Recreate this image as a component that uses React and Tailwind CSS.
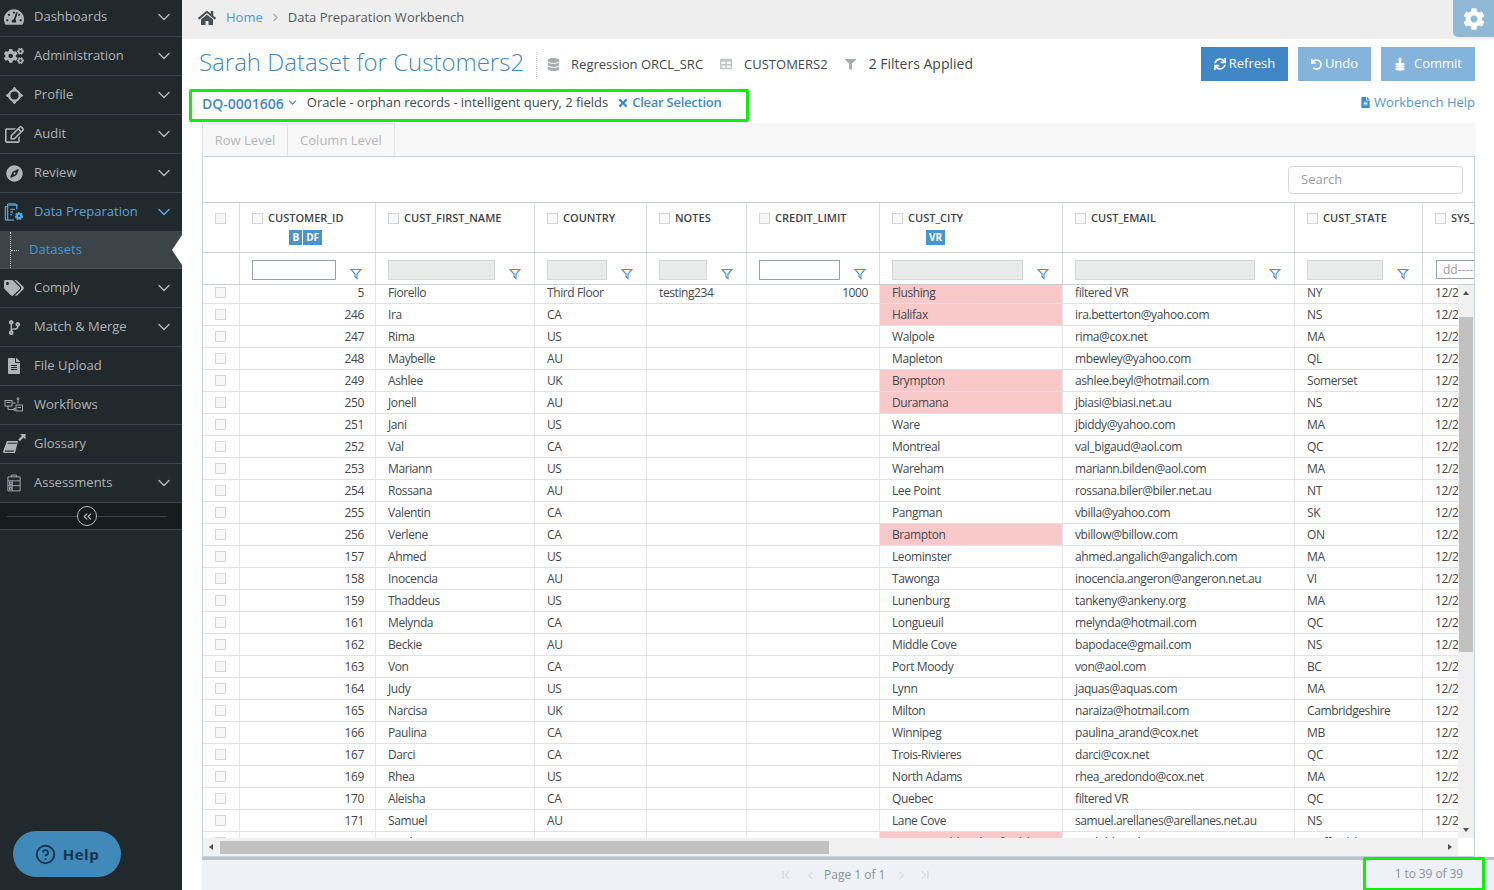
import {
  FaCodeBranch,
  FaCog,
  FaCogs,
  FaCompass,
  FaDatabase,
  FaFileAlt,
  FaFilter,
  FaHome,
  FaRegEdit,
  FaSync,
  FaTable,
  FaTachometerAlt,
  FaTags,
  FaTimes,
  FaUndo,
} from "react-icons/fa";
import {
  ChevronDown,
  ChevronFirst,
  ChevronLast,
  ChevronLeft,
  ChevronRight,
  ChevronsLeft,
  CircleHelp,
} from "lucide-react";

const rows = [
  ["5", "Fiorello", "Third Floor", "testing234", "1000", "Flushing", "filtered VR", "NY", true],
  ["246", "Ira", "CA", "", "", "Halifax", "ira.betterton@yahoo.com", "NS", true],
  ["247", "Rima", "US", "", "", "Walpole", "rima@cox.net", "MA"],
  ["248", "Maybelle", "AU", "", "", "Mapleton", "mbewley@yahoo.com", "QL"],
  ["249", "Ashlee", "UK", "", "", "Brympton", "ashlee.beyl@hotmail.com", "Somerset", true],
  ["250", "Jonell", "AU", "", "", "Duramana", "jbiasi@biasi.net.au", "NS", true],
  ["251", "Jani", "US", "", "", "Ware", "jbiddy@yahoo.com", "MA"],
  ["252", "Val", "CA", "", "", "Montreal", "val_bigaud@aol.com", "QC"],
  ["253", "Mariann", "US", "", "", "Wareham", "mariann.bilden@aol.com", "MA"],
  ["254", "Rossana", "AU", "", "", "Lee Point", "rossana.biler@biler.net.au", "NT"],
  ["255", "Valentin", "CA", "", "", "Pangman", "vbilla@yahoo.com", "SK"],
  ["256", "Verlene", "CA", "", "", "Brampton", "vbillow@billow.com", "ON", true],
  ["157", "Ahmed", "US", "", "", "Leominster", "ahmed.angalich@angalich.com", "MA"],
  ["158", "Inocencia", "AU", "", "", "Tawonga", "inocencia.angeron@angeron.net.au", "VI"],
  ["159", "Thaddeus", "US", "", "", "Lunenburg", "tankeny@ankeny.org", "MA"],
  ["161", "Melynda", "CA", "", "", "Longueuil", "melynda@hotmail.com", "QC"],
  ["162", "Beckie", "AU", "", "", "Middle Cove", "bapodace@gmail.com", "NS"],
  ["163", "Von", "CA", "", "", "Port Moody", "von@aol.com", "BC"],
  ["164", "Judy", "US", "", "", "Lynn", "jaquas@aquas.com", "MA"],
  ["165", "Narcisa", "UK", "", "", "Milton", "naraiza@hotmail.com", "Cambridgeshire"],
  ["166", "Paulina", "CA", "", "", "Winnipeg", "paulina_arand@cox.net", "MB"],
  ["167", "Darci", "CA", "", "", "Trois-Rivieres", "darci@cox.net", "QC"],
  ["169", "Rhea", "US", "", "", "North Adams", "rhea_aredondo@cox.net", "MA"],
  ["170", "Aleisha", "CA", "", "", "Quebec", "filtered VR", "QC"],
  ["171", "Samuel", "AU", "", "", "Lane Cove", "samuel.arellanes@arellanes.net.au", "NS"],
  ["172", "Noel", "UK", "", "", "Aston Tirrold and Oxfordshire", "noah.bl@aol.com", "Staffordshire", true],
];

const ProfileIcon = () => (
  <svg viewBox="0 0 20 20" className="w-[19px] h-[19px]" fill="none" stroke="currentColor">
    <circle cx="10" cy="10" r="5.5" strokeWidth="2.4" />
    <path d="M10 1l2 3h-4zM10 19l2-3h-4zM1 10l3-2v4zM19 10l-3-2v4z" fill="currentColor" strokeWidth="1" />
  </svg>
);

const DataPrepIcon = () => (
  <svg viewBox="0 0 22 22" className="w-[20px] h-[20px]" fill="none" stroke="currentColor" strokeWidth="1.4">
    <path d="M5 3.5h8a1 1 0 0 1 1 1V8M5 20H2.5a1 1 0 0 1-1-1V6a1 1 0 0 1 1-1H4" />
    <path d="M11 20H5a1 1 0 0 1-1-1V3a1 1 0 0 1 1-1h7l3 2" />
    <path d="M7 8h5M7 11h3M7 14h2" />
    <circle cx="16.5" cy="15.5" r="3.5" fill="currentColor" strokeWidth="2" strokeDasharray="2 1" />
    <circle cx="16.5" cy="15.5" r="1.1" fill="#22292d" stroke="none" />
  </svg>
);

const WorkflowIcon = () => (
  <svg viewBox="0 0 20 16" className="w-[20px] h-[16px]" fill="none" stroke="currentColor" strokeWidth="0.9">
    <rect x="1" y="3.5" width="7" height="5.5" />
    <path d="M2.5 5.500h4M4 9v3.500h6" />
    <path d="M8 6h3.500M14 2.500v4" />
    <circle cx="14" cy="1.700" r="1" />
    <rect x="12" y="8" width="6.500" height="6" />
    <path d="M13.500 10.500h3.500M10 11l2 1.500-2 1z" />
  </svg>
);

const GlossaryIcon = () => (
  <svg viewBox="0 0 24 22" className="w-[24px] h-[22px]" fill="currentColor">
    <path d="M5 8h11l-3 12H1.500C1 19 1 18 1.500 17z" />
    <path d="M3 17.500h9l-.4 1.200H3z" fill="#22292d" />
    <path d="M6 9.800h9l-.3 1H5.700z" fill="#22292d" />
    <path d="M18 1h5.500v5.500l-1.900-1.900-3.700 3.700-1.700-1.700 3.700-3.700z" />
  </svg>
);

const AssessIcon = () => (
  <svg viewBox="0 0 16 20" className="w-[14px] h-[18px]" fill="none" stroke="currentColor" strokeWidth="1">
    <path d="M1 3h14v16H1zM5 3V1h6v2" />
    <path d="M1 7.500h14M1 13h14M6 7.500V19" />
    <rect x="2.800" y="9" width="2" height="2.500" />
    <rect x="2.800" y="14.700" width="2" height="2.500" />
  </svg>
);

const CommitIcon = () => (
  <svg viewBox="0 0 14 16" className="w-[12px] h-[14px]" fill="currentColor">
    <path d="M7 0l3 3.500H8.200V7H5.800V3.500H4z" />
    <ellipse cx="7" cy="8" rx="5.500" ry="1.500" />
    <ellipse cx="7" cy="11" rx="5.500" ry="1.500" />
    <ellipse cx="7" cy="14" rx="5.500" ry="1.500" />
  </svg>
);

const FunnelIcon = () => (
  <svg viewBox="0 0 12 12" className="w-[12px] h-[12px] text-[#4b94cf]" fill="none" stroke="currentColor" strokeWidth="1.200">
    <path d="M1 1.500h10L7 6v4.500L5 9V6z" />
  </svg>
);

const menu = [
  { label: "Dashboards", icon: <FaTachometerAlt className="text-[20px]" />, arrow: true, h: "h-[37px] pb-[2px]" },
  { label: "Administration", icon: <FaCogs className="text-[20px]" />, arrow: true },
  { label: "Profile", icon: <ProfileIcon />, arrow: true },
  { label: "Audit", icon: <FaRegEdit className="text-[19px]" />, arrow: true },
  { label: "Review", icon: <FaCompass className="text-[17px]" />, arrow: true },
  { label: "Data Preparation", icon: <DataPrepIcon />, arrow: true, active: true },
];

const menu2 = [
  { label: "Comply", icon: <FaTags className="text-[20px]" />, arrow: true },
  { label: "Match & Merge", icon: <FaCodeBranch className="text-[15px]" />, arrow: true },
  { label: "File Upload", icon: <FaFileAlt className="text-[16px]" /> },
  { label: "Workflows", icon: <WorkflowIcon /> },
  { label: "Glossary", icon: <GlossaryIcon /> },
  { label: "Assessments", icon: <AssessIcon />, arrow: true },
];

const MenuItem = ({ item }) => (
  <div
    className={`flex items-center border-b border-[#3c4549] text-[13px] ${item.h || "h-[39px]"} ${
      item.active ? "text-[#5aa3d8]" : "text-[#aeb4b7]"
    }`}
  >
    <span className="w-[34px] flex justify-center pr-[6px] shrink-0">{item.icon}</span>
    <span className="flex-1 whitespace-nowrap">{item.label}</span>
    {item.arrow && <ChevronDown size={20} strokeWidth={1.8} className="mr-[8px]" />}
  </div>
);

const Sidebar = () => (
  <aside className="w-[182px] shrink-0 bg-[#22292d] h-[890px] flex flex-col relative">
    {menu.map((m) => (
      <MenuItem key={m.label} item={m} />
    ))}
    <div className="h-[37px] bg-[#3b4446] border-b border-[#4a5356] flex items-center relative text-[13px] text-[#4f97cf]">
      <span className="ml-[10px] w-[1px] h-full border-l border-dotted border-[#c5cbce]" />
      <span className="w-[8px] border-t border-dotted border-[#c5cbce] mr-[10px]" />
      Datasets
      <span className="absolute right-0 top-[3px] w-0 h-0 border-y-[15px] border-y-transparent border-r-[10px] border-r-white" />
    </div>
    {menu2.map((m) => (
      <MenuItem key={m.label} item={m} />
    ))}
    <div className="h-[27px] bg-[#171c1e] border-b border-[#3c4549] flex items-center pl-[7px] pr-[15px]">
      <span className="flex-1 border-t border-[#3c4549]" />
      <span className="w-[20px] h-[20px] rounded-full border border-[#b4babd] text-[#b4babd] flex items-center justify-center">
        <ChevronsLeft size={13} />
      </span>
      <span className="flex-1 border-t border-[#3c4549]" />
    </div>
    <div className="flex-1" />
    <div className="mb-[13px] ml-[13px] w-[108px] h-[46px] rounded-full bg-[#3f8ab8] flex items-center justify-center gap-[7px] text-[#17354a] text-[15px] font-bold tracking-[0.5px]">
      <CircleHelp size={21} strokeWidth={2.2} />
      Help
    </div>
  </aside>
);

const Check = ({ className = "" }) => (
  <span className={`inline-block w-[11px] h-[11px] border border-[#d3d6d8] bg-[#f8f8f8] shrink-0 ${className}`} />
);

const Badge = ({ children }) => (
  <span className="bg-[#4a94cc] text-white text-[10px] font-bold h-[15px] px-[3px] flex items-center">{children}</span>
);

const HeadCell = ({ w, label, badges }) => (
  <div className={`${w} shrink-0 border-r border-[#d8dcdf] pl-[12px] pt-[8px] flex items-start gap-[5px]`}>
    <Check className="mt-[2px]" />
    <div className="flex flex-col items-center text-[11px] leading-[13px] font-semibold text-[#3f4548] whitespace-nowrap">
      {label}
      {badges && (
        <div className="flex gap-[1px] mt-[6px]">
          {badges.map((b) => (
            <Badge key={b}>{b}</Badge>
          ))}
        </div>
      )}
    </div>
  </div>
);

const FilterCell = ({ w, input, open }) => (
  <div className={`${w} shrink-0 border-r border-[#d8dcdf] pl-[12px] pr-[13px] pt-[7px] flex items-start justify-between`}>
    <span className={`${input} h-[20px] border ${open ? "bg-white border-[#93a3a6]" : "bg-[#e9eaea] border-[#d5d8d8]"}`} />
    <span className="mt-[8px]">
      <FunnelIcon />
    </span>
  </div>
);

const Cell = ({ w, right, pink, children }) => (
  <div
    className={`${w} shrink-0 border-r border-[#e4e6e8] flex items-center whitespace-nowrap overflow-hidden ${
      right ? "justify-end pl-[12px] pr-[11px]" : "px-[12px]"
    } ${pink ? "bg-[#f9c9ca]" : ""}`}
  >
    {children}
  </div>
);

const Btn = ({ className, children }) => (
  <button className={`h-[34px] flex items-center justify-center text-white text-[13px] ${className}`}>{children}</button>
);

const Grid = () => (
  <div className="border border-[#c5d2df] ml-[20px] mr-[19px] flex flex-col">
    <div className="h-[46px] flex items-center justify-end pr-[11px] border-b border-[#c8ced2]">
      <div className="w-[175px] h-[28px] border border-[#d5d8da] rounded-[4px] pl-[12px] flex items-center text-[13px] text-[#9a9ea1]">
        Search
      </div>
    </div>
    <div className="h-[50px] flex border-b border-[#c8ced2] overflow-hidden">
      <div className="w-[37px] shrink-0 border-r border-[#d8dcdf] flex justify-center pr-[2px] pt-[10px]">
        <Check />
      </div>
      <HeadCell w="w-[136px]" label="CUSTOMER_ID" badges={["B", "DF"]} />
      <HeadCell w="w-[159px]" label="CUST_FIRST_NAME" />
      <HeadCell w="w-[112px]" label="COUNTRY" />
      <HeadCell w="w-[100px]" label="NOTES" />
      <HeadCell w="w-[133px]" label="CREDIT_LIMIT" />
      <HeadCell w="w-[183px]" label="CUST_CITY" badges={["VR"]} />
      <HeadCell w="w-[232px]" label="CUST_EMAIL" />
      <HeadCell w="w-[128px]" label="CUST_STATE" />
      <HeadCell w="w-[60px]" label="SYS_CREATED" />
    </div>
    <div className="h-[32px] flex border-b border-[#c8ced2] overflow-hidden">
      <div className="w-[37px] shrink-0 border-r border-[#d8dcdf]" />
      <FilterCell w="w-[136px]" input="w-[84px]" open />
      <FilterCell w="w-[159px]" input="w-[107px]" />
      <FilterCell w="w-[112px]" input="w-[60px]" />
      <FilterCell w="w-[100px]" input="w-[48px]" />
      <FilterCell w="w-[133px]" input="w-[81px]" open />
      <FilterCell w="w-[183px]" input="w-[131px]" />
      <FilterCell w="w-[232px]" input="w-[180px]" />
      <FilterCell w="w-[128px]" input="w-[76px]" />
      <div className="w-[60px] shrink-0 pl-[13px] pt-[7px]">
        <div className="h-[19px] border border-[#93a3a6] pl-[6px] text-[12px] leading-[17px] text-[#9a9ea1] whitespace-nowrap overflow-hidden">
          dd----
        </div>
      </div>
    </div>
    <div className="flex h-[553px]">
      <div className="flex-1 min-w-0 h-full overflow-hidden">
        <div className="-mt-[3px] text-[12px] tracking-[-0.4px] text-[#44494c]">
          {rows.map((r) => (
            <div key={r[0]} className="h-[22px] flex border-b border-[#dfe1e3] w-[1400px]">
              <div className="w-[37px] shrink-0 border-r border-[#e4e6e8] flex items-center justify-center pr-[2px]">
                <Check />
              </div>
              <Cell w="w-[136px]" right>{r[0]}</Cell>
              <Cell w="w-[159px]">{r[1]}</Cell>
              <Cell w="w-[112px]">{r[2]}</Cell>
              <Cell w="w-[100px]">{r[3]}</Cell>
              <Cell w="w-[133px]" right>{r[4]}</Cell>
              <Cell w="w-[183px]" pink={r[8]}>{r[5]}</Cell>
              <Cell w="w-[232px]">{r[6]}</Cell>
              <Cell w="w-[128px]">{r[7]}</Cell>
              <Cell w="w-[60px]">12/23/2019</Cell>
            </div>
          ))}
        </div>
      </div>
      <div className="w-[16px] shrink-0 bg-[#f1f1f1] flex flex-col items-center relative">
        <span className="mt-[6px] w-0 h-0 border-x-[3.5px] border-x-transparent border-b-[4px] border-b-[#505050]" />
        <span className="w-[14px] h-[335px] bg-[#c1c1c1] mt-[22px]" />
        <span className="mt-auto mb-[6px] w-0 h-0 border-x-[3.5px] border-x-transparent border-t-[4px] border-t-[#505050]" />
      </div>
    </div>
    <div className="h-[18px] bg-[#f1f1f1] flex items-center mr-[16px]">
      <span className="ml-[6px] w-0 h-0 border-y-[3.5px] border-y-transparent border-r-[4px] border-r-[#505050]" />
      <span className="ml-[7px] w-[609px] h-[13px] bg-[#c1c1c1]" />
      <span className="ml-auto mr-[6px] w-0 h-0 border-y-[3.5px] border-y-transparent border-l-[4px] border-l-[#505050]" />
    </div>
  </div>
);

const App = () => (
  <div className="w-[1494px] h-[890px] overflow-hidden flex bg-white font-['Open_Sans',sans-serif] text-[#44494c]">
    <Sidebar />
    <main className="flex-1 min-w-0 flex flex-col relative">
      <div className="h-[39px] bg-[#eeeeee] flex items-center pl-[16px] pb-[4px] text-[13px]">
        <FaHome className="text-[18px] text-[#4a4f52] mr-[10px]" />
        <span className="text-[#4f97cf]">Home</span>
        <ChevronRight size={13} className="mx-[6px] text-[#a4a8aa]" />
        <span className="text-[#55595c]">Data Preparation Workbench</span>
      </div>
      <div className="absolute right-0 top-0 w-[41px] h-[37px] rounded-bl-[5px] bg-[#90b9d5] flex items-center justify-center text-white text-[22px]">
        <FaCog />
      </div>
      <div className="h-[50px] flex items-center pl-[17px] pr-[19px]">
        <h1 className="text-[24px] font-light text-[#3f8ac4] whitespace-nowrap pb-[4px]">Sarah Dataset for Customers2</h1>
        <span className="h-[25px] border-l border-dotted border-[#c4c7c9] ml-[12px] mr-[10px]" />
        <FaDatabase className="text-[13px] text-[#a9adb0] mr-[11px]" />
        <span className="text-[13px] mr-[17px] pt-[1px]">Regression ORCL_SRC</span>
        <FaTable className="text-[12px] text-[#c2c5c7] mr-[12px]" />
        <span className="text-[13px] mr-[17px] pt-[1px]">CUSTOMERS2</span>
        <FaFilter className="text-[11px] text-[#a9adb0] mr-[13px]" />
        <span className="text-[14px] pb-[1px]">2 Filters Applied</span>
        <div className="ml-auto flex gap-[10px]">
          <Btn className="w-[87px] bg-[#3f87c7] gap-[3px]">
            <FaSync className="text-[12px]" />
            Refresh
          </Btn>
          <Btn className="w-[73px] bg-[#84b3dc] gap-[3px]">
            <FaUndo className="text-[11px]" />
            Undo
          </Btn>
          <Btn className="w-[94px] bg-[#84b3dc] gap-[8px]">
            <CommitIcon />
            Commit
          </Btn>
        </div>
      </div>
      <div className="flex items-start justify-between h-[34px] pl-[7px] pr-[19px]">
        <div className="w-[560px] h-[33px] border-[3px] border-[#0cf00c] rounded-[2px] flex items-center pl-[10px] pb-[6px] whitespace-nowrap">
          <span className="text-[14px] font-semibold text-[#3f8ac4] pt-[2px]">DQ-0001606</span>
          <ChevronDown size={13} className="text-[#3f8ac4] ml-[2px] mr-[8px]" />
          <span className="text-[13px] tracking-[-0.04px] text-[#44494c]">Oracle - orphan records - intelligent query, 2 fields</span>
          <FaTimes className="text-[12px] text-[#3f8ac4] ml-[9px] mr-[3px]" />
          <span className="text-[13px] font-semibold tracking-[-0.25px] text-[#3f8ac4]">Clear Selection</span>
        </div>
        <div className="flex items-center gap-[3px] text-[13px] text-[#4f97cf] pt-[4px]">
          <FaFileAlt className="text-[11px] text-[#3f87c7]" />
          Workbench Help
        </div>
      </div>
      <div className="h-[33px] ml-[20px] mr-[19px] bg-[#f8f8f8] flex text-[13px] text-[#b4b7b9]">
        <div className="w-[86px] pt-[1px] border border-b-0 border-[#dfe4e8] flex items-center justify-center">Row Level</div>
        <div className="w-[107px] pt-[1px] border-r border-t border-[#dfe4e8] flex items-center justify-center">Column Level</div>
      </div>
      <Grid />
      <div className="flex-1 ml-[20px] bg-[#eef1f6] border-t-[3px] border-[#bdc3c7] flex items-center relative text-[12px] text-[#8e9296]">
        <div className="ml-[577px] flex items-center text-[#c4c7ca]">
          <ChevronFirst size={14} strokeWidth={1.5} />
          <ChevronLeft size={13} strokeWidth={1.5} className="ml-[11px]" />
          <span className="mx-[7px] text-[#8e9296]">Page 1 of 1</span>
          <ChevronRight size={13} strokeWidth={1.5} className="ml-[3px]" />
          <ChevronLast size={14} strokeWidth={1.5} className="ml-[10px]" />
        </div>
        <div className="absolute right-[9px] -top-[3px] w-[122px] h-[34px] border-[3px] border-[#0cf00c] rounded-[2px] flex items-center justify-end pr-[19px] tracking-[-0.1px]">
          1 to 39 of 39
        </div>
      </div>
    </main>
  </div>
);

export default App;
